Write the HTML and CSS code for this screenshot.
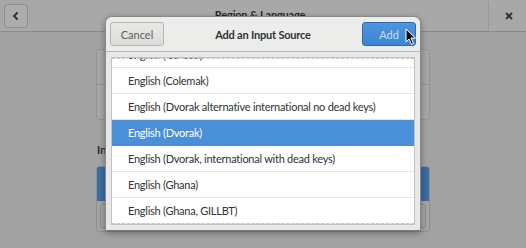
FILE: index.html
```html
<!DOCTYPE html>
<html lang="en">
    <head>
        <meta charset="UTF-8" />
        <meta name="viewport" content="width=device-width, initial-scale=1.0" />
        <title>Region &amp; Language</title>
        <link rel="stylesheet" href="styles.css">
    </head>
    <body>
        <div class="window">
            <header class="titlebar">
                <button class="back-btn" aria-label="Back">
                    <svg width="10" height="10" viewBox="0 0 10 10"><path d="M6.5 1.5 L3 5 L6.5 8.5" fill="none" stroke="#2e2e2e" stroke-width="1.8" /></svg>
                </button>
                <div class="window-title">Region &amp; Language</div>
                <div class="title-sep"></div>
                <div class="close-btn">
                    <svg width="8" height="8" viewBox="0 0 8 8"><path d="M1 1 L7 7 M7 1 L1 7" stroke="#2e2e2e" stroke-width="1.8" /></svg>
                </div>
            </header>
            <main class="page">
                <div class="content">
                    <div class="frame">
                        <div class="frame-row"></div>
                        <div class="frame-row"></div>
                    </div>
                    <h3 class="section-title">In</h3>
                    <div class="sources">
                        <div class="source-row"></div>
                        <div class="toolbar">
                            <span class="tool-btn"></span>
                            <span class="tool-btn"></span>
                        </div>
                    </div>
                </div>
            </main>

            <div class="dialog">
                <div class="dialog-header">
                    <button class="btn">Cancel</button>
                    <div class="dialog-title">Add an Input Source</div>
                    <button class="btn btn-primary">Add</button>
                </div>
                <div class="list-frame">
                    <ul class="list">
                        <li>English (Canada)</li>
                        <li>English (Colemak)</li>
                        <li>English (Dvorak alternative international no dead keys)</li>
                        <li class="selected">English (Dvorak)</li>
                        <li>English (Dvorak, international with dead keys)</li>
                        <li>English (Ghana)</li>
                        <li>English (Ghana, GILLBT)</li>
                    </ul>
                </div>
            </div>

            <svg class="cursor" width="12" height="18" viewBox="0 0 12 18">
                <path d="M1 1 L1 14 L4 11 L6.5 16.5 L8.5 15.5 L6 10 L10.5 10 Z" fill="#111" stroke="#fff" stroke-width="1" />
            </svg>
        </div>
    </body>
</html>
```

FILE: styles.css
```css
body {
    margin: 0;
    font-family: Lato, 'Noto Sans', sans-serif;
    font-size: 11px;
    color: #2e3436;
}

.window {
    position: relative;
    width: 526px;
    height: 248px;
    overflow: hidden;
    background-color: #a2a2a2;
}

.titlebar {
    display: flex;
    align-items: center;
    height: 32px;
    padding: 0 4px;
    box-sizing: border-box;
    background-color: #a8a8a8;
    border-bottom: 1px solid #8c8c8c;
}

.back-btn {
    display: flex;
    align-items: center;
    justify-content: center;
    width: 24px;
    height: 24px;
    padding: 0;
    border: 1px solid #8e8e8e;
    border-radius: 4px;
    background-color: #acacab;
}

.window-title {
    flex: 1;
    text-align: center;
    font-weight: bold;
    font-size: 11px;
    letter-spacing: -0.2px;
    color: #2a2a2a;
    padding-left: 4px;
    margin-top: -2px;
}

.title-sep {
    width: 1px;
    height: 28px;
    background-color: #999;
    margin-right: 12px;
}

.close-btn {
    display: flex;
    align-items: center;
    justify-content: center;
    width: 16px;
    height: 16px;
    margin-right: 5px;
}

.page {
    padding: 17px 0 0 96px;
}

.content {
    width: 334px;
}

.frame {
    border: 1px solid #939393;
    border-radius: 3px;
    background-color: #a6a6a6;
}

.frame-row {
    height: 34px;
}

.frame-row + .frame-row {
    border-top: 1px solid #939393;
}

.section-title {
    margin: 23px 0 0 1px;
    height: 23px;
    font-size: 11px;
    font-weight: bold;
    color: #2a2a2a;
}

.sources {
    border: 1px solid #8e8e8e;
    border-radius: 3px;
    overflow: hidden;
}

.source-row {
    height: 34px;
    background-color: #3b6ca4;
}

.toolbar {
    display: flex;
    justify-content: space-between;
    height: 30px;
    padding: 3px;
    box-sizing: border-box;
    background-color: #a4a4a4;
}

.tool-btn {
    width: 24px;
    border: 1px solid #8e8e8e;
    border-radius: 3px;
}

/* dialog */
.dialog {
    position: absolute;
    left: 105px;
    top: 16px;
    width: 316px;
    height: 215px;
    box-sizing: border-box;
    display: flex;
    flex-direction: column;
    background-color: #e8e8e7;
    border: 1px solid #8a8a8a;
    border-bottom-color: #7a7a7a;
    border-radius: 7px 7px 0 0;
    box-shadow: 0 2px 6px rgba(0, 0, 0, 0.35);
}

.dialog-header {
    display: flex;
    align-items: center;
    height: 34px;
    padding: 0 4px;
    flex-shrink: 0;
    border-bottom: 1px solid #b8b8b4;
    background-color: #ececeb;
    border-radius: 7px 7px 0 0;
}

.dialog-title {
    flex: 1;
    text-align: center;
    font-weight: bold;
    font-size: 11px;
    letter-spacing: -0.2px;
    color: #2e3436;
}

.btn {
    width: 54px;
    height: 24px;
    padding: 0;
    font-family: inherit;
    font-size: 11px;
    color: #5d5f5b;
    border: 1px solid #b6b6b3;
    border-radius: 3px;
    background: linear-gradient(#e8e8e7, #dcdcdb);
}

.btn-primary {
    color: #c9dcf3;
    border-color: #2a6bb9;
    background: linear-gradient(#4f94dc, #3d85d5);
}

.list-frame {
    position: relative;
    flex: 1;
    margin: 5px;
    border: 1px solid #c2c2bf;
    background-color: #fff;
    overflow: hidden;
}

.list-frame::before,
.list-frame::after {
    content: '';
    position: absolute;
    left: 0;
    right: 0;
    border-top: 1px dashed #c8c8c6;
}

.list-frame::before {
    top: 0;
}

.list-frame::after {
    bottom: 0;
}

.list {
    list-style: none;
    margin: -16px 0 0;
    padding: 0;
}

.list li {
    height: 26px;
    line-height: 25px;
    padding-left: 16px;
    font-size: 11px;
    letter-spacing: -0.25px;
    border-bottom: 1px solid #e6e6e5;
    box-sizing: border-box;
    white-space: nowrap;
}

.list li.selected {
    background-color: #4a90d9;
    color: #fff;
    border-bottom-color: #4a90d9;
}

.cursor {
    position: absolute;
    left: 405px;
    top: 28px;
}
```
